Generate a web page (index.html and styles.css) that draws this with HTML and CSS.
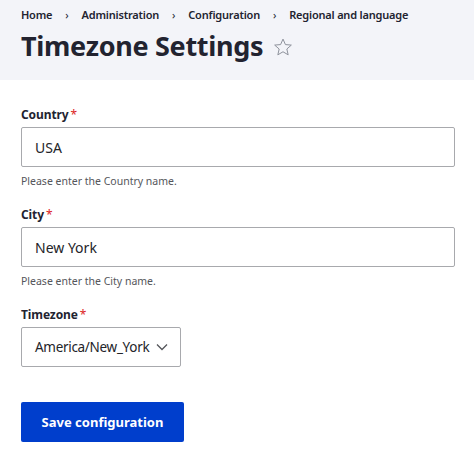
FILE: index.html
```html
<!DOCTYPE html>
<html>
<head>
<meta charset="utf-8">
<link rel="stylesheet" href="styles.css">
</head>
<body>
<header class="page-header">
  <nav class="breadcrumb">
    <span>Home</span><span class="sep">›</span>
    <span>Administration</span><span class="sep">›</span>
    <span>Configuration</span><span class="sep">›</span>
    <span>Regional and language</span>
  </nav>
  <h1 class="title">Timezone Settings
    <svg class="star" width="20" height="20" viewBox="0 0 24 24"><path d="M12 2.5l2.9 6.6 7.1.6-5.4 4.7 1.6 7-6.2-3.7-6.2 3.7 1.6-7L2 9.7l7.1-.6z" fill="none" stroke="#8e929c" stroke-width="1.2" stroke-linejoin="round"/></svg>
  </h1>
</header>
<form class="form">
  <div class="field">
    <label class="label">Country<span class="req">*</span></label>
    <div class="input">USA</div>
    <div class="help">Please enter the Country name.</div>
  </div>
  <div class="field">
    <label class="label">City<span class="req">*</span></label>
    <div class="input">New York</div>
    <div class="help">Please enter the City name.</div>
  </div>
  <div class="field">
    <label class="label">Timezone<span class="req">*</span></label>
    <div class="select"><span class="select-text">America/New_York</span>
      <svg class="chev" width="12" height="8" viewBox="0 0 12 8"><path d="M1 1.5l5 5 5-5" fill="none" stroke="#55565b" stroke-width="1.3"/></svg>
    </div>
  </div>
  <button type="button" class="btn">Save configuration</button>
</form>
</body>
</html>
```
FILE: styles.css
```css
body {
  margin: 0;
  font-family: "Noto Sans", "Open Sans", sans-serif;
  color: #222330;
  background: #fff;
}
.page-header {
  background: #f3f4f9;
  height: 80px;
  box-sizing: border-box;
  padding: 6px 21px 0;
}
.breadcrumb {
  display: flex;
  align-items: center;
  font-size: 11px;
  font-weight: 600;
  line-height: 18px;
  color: #222330;
  letter-spacing: -0.2px;
}
.breadcrumb .sep {
  margin: 0 13px;
  font-weight: 400;
}
.title {
  margin: 4px 0 0;
  font-size: 27px;
  font-weight: 700;
  line-height: 36px;
  display: flex;
  align-items: center;
  gap: 10px;
  letter-spacing: -0.3px;
}
.star { margin-top: 2px; }
.form {
  padding: 26px 21px 0;
}
.field {
  margin-bottom: 17px;
}
.label {
  display: block;
  font-size: 12px;
  font-weight: 700;
  line-height: 18px;
  margin-bottom: 3px;
  letter-spacing: -0.1px;
}
.req {
  color: #dc2323;
  margin-left: 2px;
  font-weight: 400;
}
.input, .select {
  box-sizing: border-box;
  height: 40px;
  border: 1px solid #a8a9ad;
  border-radius: 2px;
  padding: 0 13px;
  font-size: 14px;
  display: flex;
  align-items: center;
  color: #232429;
}
.input { width: 434px; }
.select {
  width: 160px;
  justify-content: space-between;
  padding-right: 12px;
}
.select-text {
  font-size: 13.5px;
  letter-spacing: -0.3px;
  white-space: nowrap;
}
.chev { flex: none; }
.help {
  font-size: 10.5px;
  color: #55565b;
  line-height: 16px;
  margin-top: 6px;
}
.btn {
  margin-top: 18px;
  width: 163px;
  height: 40px;
  border: 0;
  border-radius: 2px;
  background: #003ecc;
  color: #fff;
  font-family: inherit;
  font-size: 13px;
  font-weight: 700;
  padding: 0;
}
```
